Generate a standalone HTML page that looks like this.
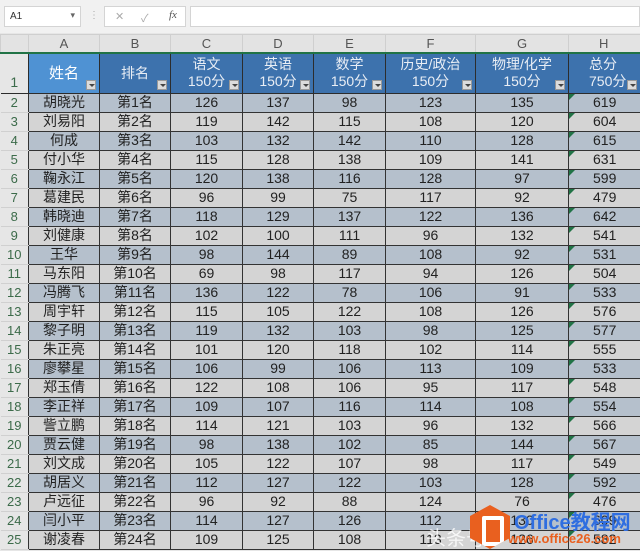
<!DOCTYPE html>
<html><head><meta charset="utf-8"><style>
*{margin:0;padding:0;box-sizing:border-box}
body{width:640px;height:549px;overflow:hidden;background:#e6e6e6;font-family:"Liberation Sans","Noto Sans CJK SC",sans-serif;position:relative}
.bar{position:absolute;left:0;top:0;width:640px;height:33px;background:#f1f1f1}
.nb{position:absolute;left:4px;top:6px;width:77px;height:21px;background:#fff;border:1px solid #d4d4d4;font-size:10px;color:#333;padding:4px 0 0 5px}
.nb:after{content:"▾";position:absolute;right:5px;top:3px;font-size:9px;color:#666}
.fx{position:absolute;left:104px;top:6px;width:82px;height:21px;background:#fff;border:1px solid #d4d4d4;font-size:11px;color:#aaa}
.fin{position:absolute;left:190px;top:6px;width:450px;height:21px;background:#fff;border:1px solid #d4d4d4}
table{position:absolute;left:0;top:34px;border-collapse:collapse;table-layout:fixed;width:648px}
td{height:19px;text-align:center;font-size:14px;color:#222;border:1px solid #333;padding:0;overflow:hidden;white-space:nowrap;line-height:17px}
tr.ch td{height:18px;background:#e3e3e3;color:#555;border:1px solid #cfcfcf;font-size:13px;border-bottom:2px solid #217346}
td.rh{background:#e6e6e6;color:#3c6b4a;border:none;border-bottom:1px solid #d0d0d0;text-align:center;font-size:13px}
tr.hd td{height:40px;background:#3d72ad;color:#e9eef5;font-size:14px;line-height:17px;position:relative;border-color:#2c2c2c}
tr.hd td.a{background:#4f92d3;color:#fff;font-size:15px}
tr.hd td.rh{background:#e6e6e6;color:#3c6b4a;vertical-align:bottom;padding-bottom:2px}
.dd{position:absolute;right:3px;bottom:3px;width:10px;height:10px;background:#dcdcdc;border:1px solid #999}
.dd:after{content:"";position:absolute;left:2px;top:3px;border-left:3px solid transparent;border-right:3px solid transparent;border-top:3px solid #444}
tr.e td{background:#b5c0cc}
tr.o td{background:#d4d4d4}
tr.e td.rh,tr.o td.rh{background:#e6e6e6}
.tri{position:relative}
.tri:before{content:"";position:absolute;left:0;top:0;border-right:6px solid transparent;border-top:6px solid #217346}
.wm{position:absolute;left:470px;top:505px;width:40px;height:44px;background:#e9601f;clip-path:polygon(50% 0,100% 25%,100% 75%,50% 100%,0 75%,0 25%)}
.wm:after{content:"";position:absolute;left:12px;top:11px;width:14px;height:22px;border:4px solid #fff;border-radius:2px}
.wt{position:absolute;left:514px;top:506px;color:#2f6ee0;font-size:20px;font-weight:bold;white-space:nowrap}
.wu{position:absolute;left:508px;top:531px;color:#e9601f;font-size:13px;font-weight:bold;white-space:nowrap}
.tt{position:absolute;left:426px;top:522px;color:#fff;font-size:20px;opacity:.8;white-space:nowrap}
</style></head><body>
<div class="bar"><div class="nb">A1</div><div style="position:absolute;left:89px;top:10px;color:#aaa;font-size:10px">⋮</div><div class="fx"><span style="position:absolute;left:10px;top:3px">✕</span><span style="position:absolute;left:36px;top:3px">✓</span><span style="position:absolute;left:64px;top:2px;color:#555;font-style:italic;font-family:'Liberation Serif',serif">fx</span></div><div class="fin"></div></div>
<table>
<colgroup><col style="width:28px"><col style="width:71px"><col style="width:71px"><col style="width:72px"><col style="width:71px"><col style="width:72px"><col style="width:90px"><col style="width:93px"><col style="width:80px"></colgroup>
<tr class="ch"><td style="background:#e3e3e3;border-right-color:#cfcfcf"></td><td>A</td><td>B</td><td>C</td><td>D</td><td>E</td><td>F</td><td>G</td><td style="text-align:left;padding-left:30px">H</td></tr>
<tr class="hd"><td class="rh">1</td><td class="a">姓名<span class="dd"></span></td><td>排名<span class="dd"></span></td><td>语文<br>150分<span class="dd"></span></td><td>英语<br>150分<span class="dd"></span></td><td>数学<br>150分<span class="dd"></span></td><td>历史/政治<br>150分<span class="dd"></span></td><td>物理/化学<br>150分<span class="dd"></span></td><td style="text-align:left;padding-left:20px">总分<br>750分<span class="dd" style="right:11px"></span></td></tr>
<tr class="e"><td class="rh">2</td><td>胡晓光</td><td>第1名</td><td>126</td><td>137</td><td>98</td><td>123</td><td>135</td><td class="tri" style="text-align:left;padding-left:24px">619</td></tr>
<tr class="o"><td class="rh">3</td><td>刘易阳</td><td>第2名</td><td>119</td><td>142</td><td>115</td><td>108</td><td>120</td><td class="tri" style="text-align:left;padding-left:24px">604</td></tr>
<tr class="e"><td class="rh">4</td><td>何成</td><td>第3名</td><td>103</td><td>132</td><td>142</td><td>110</td><td>128</td><td class="tri" style="text-align:left;padding-left:24px">615</td></tr>
<tr class="o"><td class="rh">5</td><td>付小华</td><td>第4名</td><td>115</td><td>128</td><td>138</td><td>109</td><td>141</td><td class="tri" style="text-align:left;padding-left:24px">631</td></tr>
<tr class="e"><td class="rh">6</td><td>鞠永江</td><td>第5名</td><td>120</td><td>138</td><td>116</td><td>128</td><td>97</td><td class="tri" style="text-align:left;padding-left:24px">599</td></tr>
<tr class="o"><td class="rh">7</td><td>葛建民</td><td>第6名</td><td>96</td><td>99</td><td>75</td><td>117</td><td>92</td><td class="tri" style="text-align:left;padding-left:24px">479</td></tr>
<tr class="e"><td class="rh">8</td><td>韩晓迪</td><td>第7名</td><td>118</td><td>129</td><td>137</td><td>122</td><td>136</td><td class="tri" style="text-align:left;padding-left:24px">642</td></tr>
<tr class="o"><td class="rh">9</td><td>刘健康</td><td>第8名</td><td>102</td><td>100</td><td>111</td><td>96</td><td>132</td><td class="tri" style="text-align:left;padding-left:24px">541</td></tr>
<tr class="e"><td class="rh">10</td><td>王华</td><td>第9名</td><td>98</td><td>144</td><td>89</td><td>108</td><td>92</td><td class="tri" style="text-align:left;padding-left:24px">531</td></tr>
<tr class="o"><td class="rh">11</td><td>马东阳</td><td>第10名</td><td>69</td><td>98</td><td>117</td><td>94</td><td>126</td><td class="tri" style="text-align:left;padding-left:24px">504</td></tr>
<tr class="e"><td class="rh">12</td><td>冯腾飞</td><td>第11名</td><td>136</td><td>122</td><td>78</td><td>106</td><td>91</td><td class="tri" style="text-align:left;padding-left:24px">533</td></tr>
<tr class="o"><td class="rh">13</td><td>周宇轩</td><td>第12名</td><td>115</td><td>105</td><td>122</td><td>108</td><td>126</td><td class="tri" style="text-align:left;padding-left:24px">576</td></tr>
<tr class="e"><td class="rh">14</td><td>黎子明</td><td>第13名</td><td>119</td><td>132</td><td>103</td><td>98</td><td>125</td><td class="tri" style="text-align:left;padding-left:24px">577</td></tr>
<tr class="o"><td class="rh">15</td><td>朱正亮</td><td>第14名</td><td>101</td><td>120</td><td>118</td><td>102</td><td>114</td><td class="tri" style="text-align:left;padding-left:24px">555</td></tr>
<tr class="e"><td class="rh">16</td><td>廖攀星</td><td>第15名</td><td>106</td><td>99</td><td>106</td><td>113</td><td>109</td><td class="tri" style="text-align:left;padding-left:24px">533</td></tr>
<tr class="o"><td class="rh">17</td><td>郑玉倩</td><td>第16名</td><td>122</td><td>108</td><td>106</td><td>95</td><td>117</td><td class="tri" style="text-align:left;padding-left:24px">548</td></tr>
<tr class="e"><td class="rh">18</td><td>李正祥</td><td>第17名</td><td>109</td><td>107</td><td>116</td><td>114</td><td>108</td><td class="tri" style="text-align:left;padding-left:24px">554</td></tr>
<tr class="o"><td class="rh">19</td><td>訾立鹏</td><td>第18名</td><td>114</td><td>121</td><td>103</td><td>96</td><td>132</td><td class="tri" style="text-align:left;padding-left:24px">566</td></tr>
<tr class="e"><td class="rh">20</td><td>贾云健</td><td>第19名</td><td>98</td><td>138</td><td>102</td><td>85</td><td>144</td><td class="tri" style="text-align:left;padding-left:24px">567</td></tr>
<tr class="o"><td class="rh">21</td><td>刘文成</td><td>第20名</td><td>105</td><td>122</td><td>107</td><td>98</td><td>117</td><td class="tri" style="text-align:left;padding-left:24px">549</td></tr>
<tr class="e"><td class="rh">22</td><td>胡居义</td><td>第21名</td><td>112</td><td>127</td><td>122</td><td>103</td><td>128</td><td class="tri" style="text-align:left;padding-left:24px">592</td></tr>
<tr class="o"><td class="rh">23</td><td>卢远征</td><td>第22名</td><td>96</td><td>92</td><td>88</td><td>124</td><td>76</td><td class="tri" style="text-align:left;padding-left:24px">476</td></tr>
<tr class="e"><td class="rh">24</td><td>闫小平</td><td>第23名</td><td>114</td><td>127</td><td>126</td><td>112</td><td>130</td><td class="tri" style="text-align:left;padding-left:24px">609</td></tr>
<tr class="o"><td class="rh">25</td><td>谢凌春</td><td>第24名</td><td>109</td><td>125</td><td>108</td><td>113</td><td>126</td><td class="tri" style="text-align:left;padding-left:24px">582</td></tr>
</table>
<div class="tt">头条号</div>
<div class="wm"></div><div class="wt">Office教程网</div><div class="wu">www.office26.com</div>
</body></html>
